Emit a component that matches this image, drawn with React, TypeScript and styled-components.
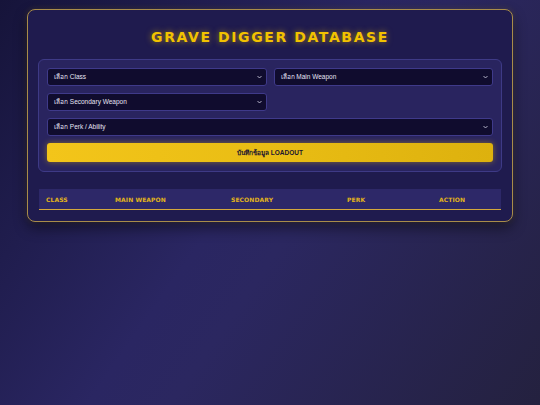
import styled, { createGlobalStyle } from 'styled-components';

const GlobalStyle = createGlobalStyle`
    html, body {
        margin: 0;
        padding: 0;
        min-height: 100%;
    }
    body {
        font-family: "Liberation Sans", "Noto Sans", Arial, sans-serif;
        background: linear-gradient(125deg, #16143a 0%, #2a2662 45%, #2b2760 55%, #24213f 100%);
        min-height: 405px;
        color: #fff;
    }
`;

const Page = styled.div`
    padding: 9px 27px;
`;

const Container = styled.div`
    background: #1f1b4e;
    border: 1px solid #a88c4a;
    border-radius: 8px;
    padding: 16px 10px 11px;
    box-shadow: 0 6px 14px rgba(0, 0, 0, 0.45), 0 0 6px rgba(242, 194, 0, 0.15);
`;

const Title = styled.h1`
    margin: 0 0 11px;
    text-align: center;
    font-family: "DejaVu Sans", Verdana, sans-serif;
    font-size: 14px;
    font-weight: bold;
    letter-spacing: 1.6px;
    color: #f2c200;
    text-shadow: 0 0 6px rgba(242, 194, 0, 0.6);
    line-height: 22px;
`;

const FormPanel = styled.div`
    background: #29245f;
    border: 1px solid #3e3a86;
    border-radius: 6px;
    padding: 8px 8px 9px;
    display: grid;
    grid-template-columns: 1fr 1fr;
    column-gap: 7px;
    row-gap: 7px;
`;

const SelectBox = styled.div<{ $wide?: boolean }>`
    grid-column: ${({ $wide }) => ($wide ? '1 / span 2' : 'auto')};
    height: 18px;
    background: #100c2e;
    border: 1px solid #3f3a8a;
    border-radius: 3px;
    box-sizing: border-box;
    display: flex;
    align-items: center;
    justify-content: space-between;
    padding: 0 4px 0 6px;
    font-size: 6.5px;
    color: #e6e4f4;
`;

const Spacer = styled.div``;

const Chevron = () => (
    <svg width="5" height="4" viewBox="0 0 10 6">
        <path d="M1 1l4 4 4-4" fill="none" stroke="#d8d6ea" strokeWidth="1.6" />
    </svg>
);

const SaveButton = styled.button`
    grid-column: 1 / span 2;
    height: 19px;
    border: none;
    border-radius: 3px;
    background: linear-gradient(90deg, #f3c51a 0%, #e9bd14 50%, #ddb10e 100%);
    box-shadow: 0 0 6px rgba(242, 194, 0, 0.45);
    color: #1b1630;
    font-family: "Liberation Sans", "Noto Sans", Arial, sans-serif;
    font-size: 6.5px;
    font-weight: bold;
    cursor: pointer;
`;

const Table = styled.div`
    margin: 17px 1px 0;
`;

const HeadRow = styled.div`
    display: grid;
    grid-template-columns: 69px 116px 116px 92px 71px;
    height: 20px;
    align-items: center;
    background: #2d2868;
    border-bottom: 1px solid #d4a83c;
`;

const HeadCell = styled.div`
    padding-left: 7px;
    font-family: "DejaVu Sans", Verdana, sans-serif;
    font-size: 6px;
    font-weight: bold;
    color: #e2b51a;
    letter-spacing: 0.1px;
`;

const columns = ['CLASS', 'MAIN WEAPON', 'SECONDARY', 'PERK', 'ACTION'];

export default function App() {
    return (
        <>
            <GlobalStyle />
            <Page>
                <Container>
                    <Title>GRAVE DIGGER DATABASE</Title>
                    <FormPanel>
                        <SelectBox>
                            <span>เลือก Class</span>
                            <Chevron />
                        </SelectBox>
                        <SelectBox>
                            <span>เลือก Main Weapon</span>
                            <Chevron />
                        </SelectBox>
                        <SelectBox>
                            <span>เลือก Secondary Weapon</span>
                            <Chevron />
                        </SelectBox>
                        <Spacer />
                        <SelectBox $wide>
                            <span>เลือก Perk / Ability</span>
                            <Chevron />
                        </SelectBox>
                        <SaveButton>บันทึกข้อมูล LOADOUT</SaveButton>
                    </FormPanel>
                    <Table>
                        <HeadRow>
                            {columns.map((c) => (
                                <HeadCell key={c}>{c}</HeadCell>
                            ))}
                        </HeadRow>
                    </Table>
                </Container>
            </Page>
        </>
    );
}
